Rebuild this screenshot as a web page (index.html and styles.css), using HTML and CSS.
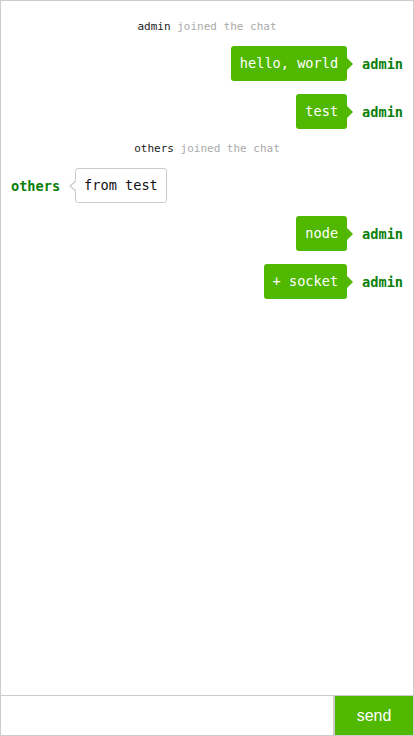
FILE: index.html
```html
<!DOCTYPE html>
<html>
<head>
<meta charset="utf-8">
<link rel="stylesheet" href="styles.css">
</head>
<body>
<div class="chat">
  <div class="messages">
    <div class="system"><span class="who">admin</span> joined the chat</div>
    <div class="msg mine"><div class="bubble">hello, world</div><span class="name">admin</span></div>
    <div class="msg mine"><div class="bubble">test</div><span class="name">admin</span></div>
    <div class="system"><span class="who">others</span> joined the chat</div>
    <div class="msg theirs"><span class="name">others</span><div class="bubble">from test</div></div>
    <div class="msg mine"><div class="bubble">node</div><span class="name">admin</span></div>
    <div class="msg mine"><div class="bubble">+ socket</div><span class="name">admin</span></div>
  </div>
  <div class="footer">
    <input class="field" type="text">
    <button class="send">send</button>
  </div>
</div>
</body>
</html>
```
FILE: styles.css
```css
html, body {
  margin: 0;
  padding: 0;
  background: #fff;
}
.chat {
  box-sizing: border-box;
  width: 414px;
  height: 736px;
  border: 1px solid #cccccc;
  display: flex;
  flex-direction: column;
  font-family: "DejaVu Sans Mono", monospace;
}
.messages {
  flex: 1;
  display: flex;
  flex-direction: column;
  gap: 13px;
  padding: 19px 10px 0 10px;
}
.system {
  text-align: center;
  font-size: 11px;
  line-height: 13px;
  height: 13px;
  color: #aaaaaa;
}
.system .who {
  color: #222;
}
.msg {
  display: flex;
  align-items: center;
  gap: 15px;
  font-size: 13.6px;
}
.msg.mine {
  justify-content: flex-end;
}
.msg.theirs {
  justify-content: flex-start;
}
.name {
  color: #0a800a;
  font-weight: bold;
}
.bubble {
  position: relative;
  line-height: 19px;
  padding: 8px 9px;
  border-radius: 3px;
}
.mine .bubble {
  background: #50b800;
  color: #fff;
}
.mine .bubble::after {
  content: "";
  position: absolute;
  right: -6px;
  top: 50%;
  margin-top: -6px;
  border-style: solid;
  border-width: 6px 0 6px 6px;
  border-color: transparent transparent transparent #50b800;
}
.theirs .bubble {
  background: #fff;
  color: #111;
  border: 1px solid #cccccc;
  padding: 7px 8px;
}
.theirs .bubble::before {
  content: "";
  position: absolute;
  left: -7px;
  top: 50%;
  margin-top: -6px;
  border-style: solid;
  border-width: 6px 7px 6px 0;
  border-color: transparent #cccccc transparent transparent;
}
.theirs .bubble::after {
  content: "";
  position: absolute;
  left: -5px;
  top: 50%;
  margin-top: -5px;
  border-style: solid;
  border-width: 5px 6px 5px 0;
  border-color: transparent #fff transparent transparent;
}
.footer {
  display: flex;
  height: 40px;
  border-top: 1px solid #cccccc;
  box-sizing: border-box;
}
.field {
  flex: 1;
  min-width: 0;
  border: none;
  margin: 0;
  padding: 0 6px;
  outline: none;
  font-size: 14px;
}
.send {
  width: 80px;
  margin: 0;
  border: none;
  border-left: 2px solid #cccccc;
  background: #50b800;
  color: #fff;
  font-family: "Liberation Sans", Arial, sans-serif;
  font-size: 16px;
  padding: 0;
}
```
